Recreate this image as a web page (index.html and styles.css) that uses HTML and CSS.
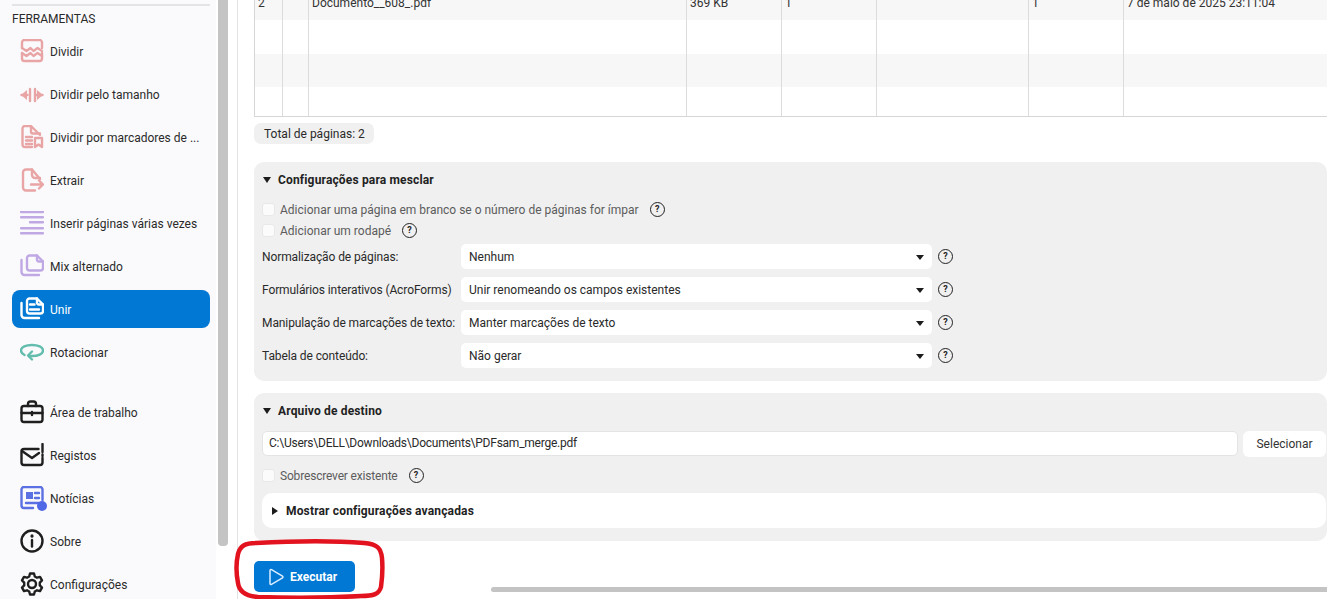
FILE: index.html
```html
<!DOCTYPE html>
<html lang="pt">
<head>
<meta charset="utf-8">
<title>PDFsam - Unir</title>
<link rel="stylesheet" href="styles.css">
</head>
<body>
<div class="app">
  <aside class="sidebar">
    <div class="rule"></div>
    <div class="side-title">FERRAMENTAS</div>
    <nav class="tools">
      <a class="item"><svg class="ico pink" viewBox="0 0 24 24"><path d="M2 9V3.500A2.500 2.500 0 0 1 4.500 1h15A2.500 2.500 0 0 1 22 3.500V9"/><path d="M2 9l4.500 3 4-3 3 3 4-3 4.500 3"/><path d="M2 14l4.500 3 4-3 3 3 4-3 4.500 3"/><path d="M2 14v5.500A2.500 2.500 0 0 0 4.500 22h15a2.500 2.500 0 0 0 2.500-2.500V14"/></svg><span>Dividir</span></a>
      <a class="item"><svg class="ico pink" viewBox="0 0 24 24"><path d="M10 7v12M15 7v12"/><path d="M1.500 13h6M22.500 13h-6"/><path class="fill" d="M1 13l6-5v10zM23 13l-6-5v10z"/></svg><span>Dividir pelo tamanho</span></a>
      <a class="item"><svg class="ico pink" viewBox="0 0 24 24"><path d="M12 22H5a2.500 2.500 0 0 1-2.500-2.500v-16A2.500 2.500 0 0 1 5 1h6l9 9"/><path d="M11 1v5.500a2 2 0 0 0 2 2h7"/><path d="M6 12h6M6 15.500h6M6 19h6"/><path d="M15 13h7v9l-3.500-2.500L15 22z"/></svg><span>Dividir por marcadores de ...</span></a>
      <a class="item"><svg class="ico pink" viewBox="0 0 24 24"><path d="M20 11l-8-9.500H6A3 3 0 0 0 3 4.500v15a3 3 0 0 0 3 3h9"/><path d="M12 1.500V7a3 3 0 0 0 3 3h5"/><path d="M11 16.500h12M19 12.500l4 4-4 4"/></svg><span>Extrair</span></a>
      <a class="item"><svg class="ico lilac" viewBox="0 0 24 24"><path d="M1 1h22M1 6.300h22M10 11.300h13M1 17.300h22M1 22.300h22"/></svg><span>Inserir páginas várias vezes</span></a>
      <a class="item"><svg class="ico lilac" viewBox="0 0 24 24"><path d="M7 14V4A2.500 2.500 0 0 1 9.500 1.500H17l6 6V14a2.500 2.500 0 0 1-2.500 2.500h-11A2.500 2.500 0 0 1 7 14z"/><path d="M17 1.500V5a2 2 0 0 0 2 2.500h4"/><path d="M1.500 6v12a3 3 0 0 0 3 3H19"/></svg><span>Mix alternado</span></a>
      <a class="item active"><svg class="ico white" viewBox="0 0 24 24"><path d="M7 14V4A2.500 2.500 0 0 1 9.500 1.500H17l6 6V14a2.500 2.500 0 0 1-2.500 2.500h-11A2.500 2.500 0 0 1 7 14z"/><path d="M17 1.500V5a2 2 0 0 0 2 2.500h4"/><path d="M1.500 6v12a3 3 0 0 0 3 3H19"/><path d="M10 7.500h4.500M10 12.500h9"/></svg><span>Unir</span></a>
      <a class="item"><svg class="ico teal" viewBox="0 0 24 24"><path d="M4.500 15C2.500 14 1 12.500 1 10.500 1 7 6 5 12 5s11 2 11 5.500c0 3.500-5 5.500-11 5.500H9"/><path d="M12 11.500l-4 4 4 4"/></svg><span>Rotacionar</span></a>
    </nav>
    <nav class="tools lower">
      <a class="item"><svg class="ico dark" viewBox="0 0 24 24"><rect x="1.500" y="6" width="21" height="16" rx="2.500"/><path d="M8 6V4a2.500 2.500 0 0 1 2.500-2.500h3A2.500 2.500 0 0 1 16 4v2"/><path d="M1.500 13h21M12 12v3"/></svg><span>Área de trabalho</span></a>
      <a class="item"><svg class="ico dark" viewBox="0 0 24 24"><path d="M18.500 6H4a2.500 2.500 0 0 0-2.500 2.500v11A2.500 2.500 0 0 0 4 22h16a2.500 2.500 0 0 0 2.500-2.500V15"/><path d="M2 8l10 7 7-5"/><path d="M22.500 1v8M22.500 11.500v1.500"/></svg><span>Registos</span></a>
      <a class="item"><span class="news"><svg class="ico blue" viewBox="0 0 24 24"><path d="M13 22H4a2.500 2.500 0 0 1-2.500-2.500v-16A2.500 2.500 0 0 1 4 1h16a2.500 2.500 0 0 1 2.500 2.500V14"/><path class="fill" d="M6 6h7v7H6z"/><path d="M15 7h4M15 12h4M6 17h13"/></svg><i class="dot"></i></span><span>Notícias</span></a>
      <a class="item"><svg class="ico dark" viewBox="0 0 24 24"><circle cx="12" cy="12" r="10.500"/><path d="M12 11v6.500"/><path class="round" d="M12 6.800v.4"/></svg><span>Sobre</span></a>
      <a class="item"><svg class="ico dark" viewBox="0 0 24 24"><circle cx="12" cy="12" r="4"/><path d="M10 1.500h4l.8 3 2.200 1.200 3-.8 2 3.500-2.200 2.200v2.800l2.200 2.200-2 3.500-3-.8-2.200 1.200-.8 3h-4l-.8-3L7 18.300l-3 .8-2-3.500 2.200-2.200v-2.800L2 8.400l2-3.500 3 .8 2.200-1.200z"/></svg><span>Configurações</span></a>
    </nav>
  </aside>
  <div class="vscroll"><div class="vthumb"></div></div>
  <main class="main">
    <div class="content">
      <section class="table">
        <div class="row tall shade"><div>2</div><div></div><div>Documento__608_.pdf</div><div>369 KB</div><div>1</div><div></div><div>1</div><div>7 de maio de 2025 23:11:04</div></div>
        <div class="row wide"><div></div><div></div><div></div><div></div><div></div><div></div><div></div><div></div></div>
        <div class="row tall shade"><div></div><div></div><div></div><div></div><div></div><div></div><div></div><div></div></div>
        <div class="row last"><div></div><div></div><div></div><div></div><div></div><div></div><div></div><div></div></div>
      </section>
      <div class="total">Total de páginas: 2</div>
      <section class="panel merge">
        <h2 class="head"><i class="tri-down"></i>Configurações para mesclar</h2>
        <label class="check"><i class="box"></i>Adicionar uma página em branco se o número de páginas for ímpar<b class="help gap">?</b></label>
        <label class="check"><i class="box"></i>Adicionar um rodapé<b class="help gap">?</b></label>
        <div class="form">
          <span>Normalização de páginas:</span><div class="select">Nenhum<i class="caret"></i></div><b class="help">?</b>
          <span>Formulários interativos (AcroForms)</span><div class="select">Unir renomeando os campos existentes<i class="caret"></i></div><b class="help">?</b>
          <span>Manipulação de marcações de texto:</span><div class="select">Manter marcações de texto<i class="caret"></i></div><b class="help">?</b>
          <span>Tabela de conteúdo:</span><div class="select">Não gerar<i class="caret"></i></div><b class="help">?</b>
        </div>
      </section>
      <section class="panel dest">
        <h2 class="head"><i class="tri-down"></i>Arquivo de destino</h2>
        <div class="path-row"><div class="path">C:\Users\DELL\Downloads\Documents\PDFsam_merge.pdf</div><button class="pick">Selecionar</button></div>
        <label class="check over"><i class="box"></i>Sobrescrever existente<b class="help gap">?</b></label>
        <div class="advanced"><i class="tri-right"></i>Mostrar configurações avançadas</div>
      </section>
      <button class="run"><svg class="play" viewBox="0 0 16 18"><path d="M2 2.500v13a1 1 0 0 0 1.500.9l11-6.500a1 1 0 0 0 0-1.700l-11-6.600A1 1 0 0 0 2 2.500z"/></svg>Executar</button>
    </div>
    <div class="hscroll"></div>
  </main>
  <svg class="mark" viewBox="0 0 152 62"><path d="M22 4C60 2 105 2 130 4c13 1 17 5 18 15 1 12 0 22-1 29-2 7-7 9-20 9-35 2-72 2-103 1C11 57 5 52 4 44 2 34 2 24 4 15 6 7 11 4 22 4z"/></svg>
</div>
</body>
</html>
```
FILE: styles.css
```css
* { box-sizing: border-box; }
html, body { margin: 0; height: 100%; overflow: hidden; background: #fff; }
body { font: 12px/16px Roboto, "Noto Sans", sans-serif; color: #2a2a2a; }
.app { position: relative; display: flex; width: 1327px; height: 599px; overflow: hidden; }

.sidebar { flex: 0 0 216px; height: 599px; padding: 4px 6px 0 12px; background: #fafafc; overflow: hidden; }
.rule { height: 2px; background: #e4e4e4; }
.side-title { margin-top: 5px; height: 16px; }
.tools { display: flex; flex-direction: column; gap: 5px; margin-top: 5px; }
.tools.lower { margin-top: 22px; }
.item { display: flex; flex: 0 0 38px; align-items: center; gap: 6px; padding-left: 8px; border-radius: 8px; }
.item > span:last-child { margin-top: 2px; }
.item.active { background: #0078d4; color: #fff; }
.ico { width: 24px; height: 24px; flex: none; fill: none; stroke-width: 2.400; stroke-linecap: round; stroke-linejoin: round; }
.pink { stroke: #e9a5a5; }
.lilac { stroke: #bfa8e4; }
.white { stroke: #fff; }
.teal { stroke: #62bdae; }
.dark { stroke: #1f1f1f; }
.blue { stroke: #5b70e2; }
.fill { stroke: none; }
.pink .fill { fill: #e9a5a5; }
.blue .fill { fill: #5b70e2; }
.round { stroke-width: 3; }
.news { position: relative; display: flex; }
.dot { position: absolute; right: -3px; bottom: -1px; width: 10px; height: 10px; border-radius: 50%; background: #4f68e6; }

.vscroll { flex: 0 0 12px; padding-left: 2px; background: #fff; }
.vthumb { width: 10px; height: 546px; background: #c4c4c4; border-radius: 0 0 4px 4px; }

.main { position: relative; flex: 1; min-width: 0; padding-left: 16px; border-left: 1px solid #e2e2e2; margin-left: 9px; overflow: hidden; }
.content { margin-top: -13px; }

.table { border-left: 1px solid #d6d6d6; border-bottom: 1px solid #d6d6d6; }
.row { display: grid; grid-template-columns: 27px 26px 378px 95px 95px 152px 95px 1fr; }
.row > div { padding: 7px 0 0 3px; border-left: 1px solid #dcdcdc; line-height: 18px; white-space: nowrap; color: #333; }
.row > div:first-child { border-left: 0; }
.tall { height: 33px; }
.wide { height: 34px; }
.last { height: 29px; }
.shade { background: #f7f7f7; }

.total { width: 120px; height: 21px; margin-top: 6px; padding-left: 10px; border-radius: 7px; background: #f0f0f0; line-height: 22px; }

.panel { margin-top: 12px; padding: 0 1px 13px 8px; border-radius: 10px; background: #f0f0f0; }
.merge { margin-top: 18px; height: 219px; }
.dest { height: 148px; }
.head { display: flex; align-items: center; gap: 7px; height: 37px; margin: 0; padding: 0 0 1px 1px; font-size: 12px; font-weight: 700; letter-spacing: .16px; color: #222; }
.tri-down { width: 0; height: 0; border: 4px solid transparent; border-top: 6px solid #1c1c1c; border-bottom: 0; }
.tri-right { width: 0; height: 0; border: 4px solid transparent; border-left: 6px solid #1c1c1c; border-right: 0; }

.check { display: flex; align-items: center; height: 21px; color: #5c5c5c; }
.box { flex: none; width: 13px; height: 13px; margin-right: 5px; border: 1px solid #e8e8e8; border-radius: 3px; background: #fbfbfb; }
.help { display: inline-flex; flex: none; align-items: center; justify-content: center; width: 15px; height: 15px; border: 1.500px solid #222; border-radius: 50%; background: transparent; font-size: 9px; line-height: 1; letter-spacing: 0; color: #222; }
.help.gap { margin-left: 11px; }

.form { display: grid; grid-template-columns: 199px 471px 15px; row-gap: 8px; grid-auto-rows: 25px; align-items: center; margin-top: 3px; }
.form > span { letter-spacing: -.1px; white-space: nowrap; }
.form .help { margin-left: 6px; }
.select { position: relative; display: flex; align-items: center; height: 25px; padding-left: 8px; border-radius: 5px; background: #fff; }
.caret { position: absolute; right: 8px; top: 11px; width: 0; height: 0; border: 4px solid transparent; border-top: 5px solid #1c1c1c; border-bottom: 0; }

.path-row { display: flex; align-items: flex-start; gap: 5px; margin-top: 1px; }
.path { flex: 0 0 976px; height: 25px; padding-left: 6px; border: 1px solid #e4e4e4; border-radius: 5px; background: #fff; letter-spacing: -.24px; line-height: 23px; }
.pick { flex: 0 0 83px; height: 26px; border: 0; border-radius: 6px; background: #fff; font: inherit; color: #333; }
.over { margin-top: 8px; letter-spacing: -.18px; }
.advanced { display: flex; align-items: center; gap: 8px; height: 35px; margin-top: 7px; padding-left: 10px; border-radius: 10px; background: #fff; font-weight: 700; letter-spacing: .16px; color: #222; }

.run { display: flex; align-items: center; width: 101px; height: 31px; margin-top: 20px; padding: 0 0 0 14px; border: 0; border-radius: 5px; background: #0078d4; font: 700 12px/16px Roboto, sans-serif; color: #fff; }
.play { width: 16px; height: 18px; margin-right: 6px; fill: none; stroke: #dceeff; stroke-width: 1.500; }

.hscroll { position: absolute; left: 253px; right: 0; top: 587px; height: 5px; border-radius: 3px 0 0 3px; background: #c4c4c4; }
.mark { position: absolute; left: 234px; top: 539px; width: 152px; height: 62px; fill: none; stroke: #e2131f; stroke-width: 4.500; }
```
